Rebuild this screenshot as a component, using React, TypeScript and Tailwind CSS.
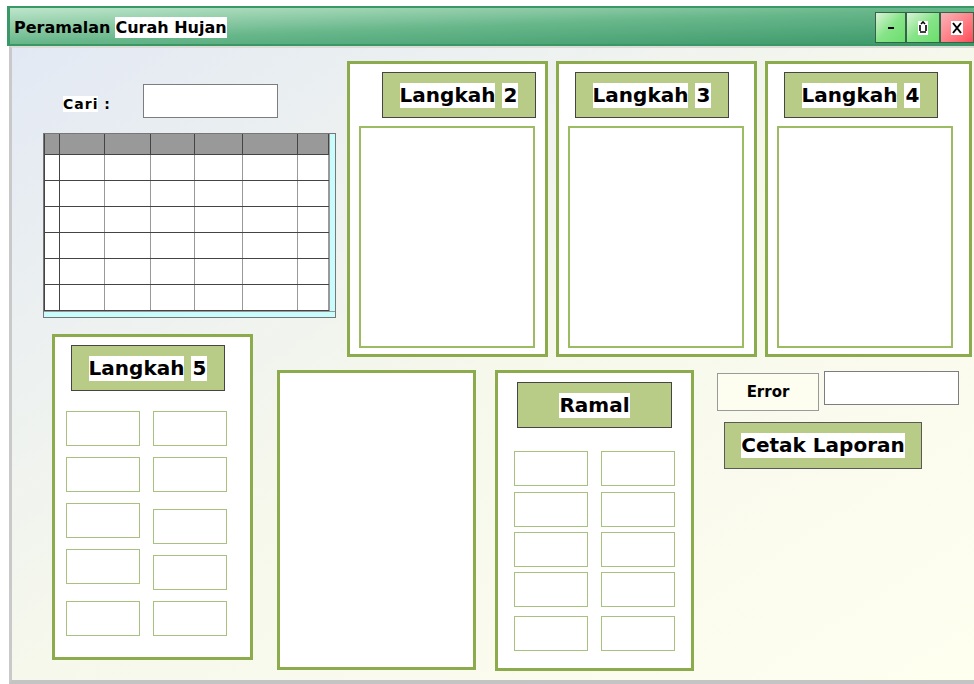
import React, { FC } from "react";

const txt = "font-['DejaVu_Sans',sans-serif] font-bold text-black";

// single entry field of the forecast form
const Field: FC<{ className?: string }> = ({ className = "" }) => (
  <div className={`h-[35px] w-[74px] border border-[#a8c17e] bg-white ${className}`} />
);

const Caption: FC<{ word: string; num?: string; className?: string }> = ({ word, num, className = "" }) => (
  <div
    className={`flex h-[46px] items-center justify-center border border-[#454545] bg-[#b8cc87] text-[20px] leading-[25px] ${txt} ${className}`}
  >
    <span className="bg-white">{word}</span>
    {num && <span className="ml-[7px] bg-white px-[1px]">{num}</span>}
  </div>
);

const StepPanel: FC<{ num: string; titleLeft: string; width: string }> = ({ num, titleLeft, width }) => (
  <div className={`h-[296px] ${width} border-[3px] border-[#8bab4c] bg-white`}>
    <Caption word="Langkah" num={num} className={`mt-[8px] w-[154px] ${titleLeft}`} />
    <div className="ml-[9px] mt-[8px] h-[222px] w-[176px] border-2 border-[#9dbb63] bg-white" />
  </div>
);

const colWidths = [15, 45, 46, 44, 48, 55, 31];

const DataGrid = () => (
  <div className="w-[293px] border border-[#777] bg-[#c9fcfc]">
    <div className="flex">
      <table className="w-[284px] table-fixed border-collapse">
        <colgroup>
          {colWidths.map((w, i) => (
            <col key={i} style={{ width: w }} />
          ))}
        </colgroup>
        <thead>
          <tr className="h-[20px] bg-[#999999]">
            {colWidths.map((_, i) => (
              <th key={i} className="border border-t-0 border-[#444] p-0" />
            ))}
          </tr>
        </thead>
        <tbody>
          {[0, 1, 2, 3, 4, 5].map((r) => (
            <tr key={r} className="h-[26px] bg-white">
              {colWidths.map((_, c) => (
                <td
                  key={c}
                  className={`border-y border-y-[#444] border-x ${c === 0 ? "border-x-[#444]" : "border-x-[#999]"} p-0`}
                />
              ))}
            </tr>
          ))}
        </tbody>
      </table>
      <div className="flex-1 border-l border-[#999]" />
    </div>
    <div className="h-[6px] border-t border-[#999]" />
  </div>
);

const WinButton: FC<{ kind: "min" | "max" | "close" }> = ({ kind }) => {
  const tone =
    kind === "close"
      ? "w-[34px] bg-gradient-to-br from-[#f7b3b9] to-[#ff4659]"
      : kind === "max"
      ? "w-[34px] bg-gradient-to-br from-[#d8f2d8] via-[#86e488] to-[#6bde6c]"
      : "w-[31px] bg-gradient-to-br from-[#d8f2d8] via-[#86e488] to-[#6bde6c]";
  return (
    <div className={`flex h-[31px] items-center justify-center border border-[#35634a] ${tone}`}>
      {kind === "min" && <div className="h-[2px] w-[6px] bg-black" />}
      {kind === "max" && (
        <svg width="10" height="14" viewBox="0 0 10 14">
          <rect x="0" y="0" width="10" height="14" fill="#fff" />
          <path d="M3 3 L5 1 L7 3 M2 4 V10 M8 4 V10 M2 11 H8" stroke="#000" strokeWidth="1.6" fill="none" />
        </svg>
      )}
      {kind === "close" && (
        <svg width="12" height="14" viewBox="0 0 12 14">
          <rect x="0" y="0" width="12" height="14" fill="#fff" />
          <path d="M2 2 L10 12 M10 2 L2 12" stroke="#000" strokeWidth="2" />
        </svg>
      )}
    </div>
  );
};

const boxRows5a = [0, 11, 11, 11, 17];
const boxRows5b = [0, 11, 17, 11, 11];
const ramalRows = [0, 6, 5, 5, 9];

export default function App() {
  return (
    <div className="h-[684px] w-[974px] overflow-hidden bg-white">
      {/* title bar */}
      <div className="ml-[7px] mt-[6px] flex h-[40px] w-[967px] border-y-[2px] border-l-[3px] border-[#399865] bg-gradient-to-br from-[#bde6cb] via-[#66b68a] to-[#3a9868]">
        <div className={`flex items-center pl-[4px] pt-[3px] text-[16px] leading-[21px] ${txt}`}>
          <span>Peramalan</span>
          <span className="ml-[5px] bg-white">Curah Hujan</span>
        </div>
        <div className="ml-auto mt-[4px] flex">
          <WinButton kind="min" />
          <WinButton kind="max" />
          <WinButton kind="close" />
        </div>
      </div>

      {/* form body */}
      <div className="ml-[9px] h-[638px] border-b-[4px] border-l-[3px] border-t-[2px] border-b-[#c4c4c4] border-l-[#c9c9c9] border-t-[#dcdcd6] bg-gradient-to-br from-[#e3e9f4] via-[#f6f8ec] to-[#fffff0]">
        <div className="flex items-start pt-[13px]">
          <div className="ml-[31px] w-[293px]">
            <div className="mt-[23px] flex items-center">
              <div className={`ml-[20px] mt-[6px] w-[80px] text-[14px] leading-[16px] tracking-[1px] ${txt}`}>
                <span className="bg-white">Cari</span> :
              </div>
              <div className="h-[34px] w-[135px] border border-[#7d7d7d] bg-white" />
            </div>
            <div className="mt-[15px]">
              <DataGrid />
            </div>
          </div>
          <div className="ml-[11px]">
            <StepPanel num="2" titleLeft="ml-[32px]" width="w-[201px]" />
          </div>
          <div className="ml-[8px]">
            <StepPanel num="3" titleLeft="ml-[16px]" width="w-[201px]" />
          </div>
          <div className="ml-[8px]">
            <StepPanel num="4" titleLeft="ml-[16px]" width="w-[207px]" />
          </div>
        </div>

        <div className="-mt-[23px] flex items-start">
          {/* Langkah 5 */}
          <div className="ml-[40px] h-[326px] w-[201px] border-[3px] border-[#8bab4c] bg-white">
            <Caption word="Langkah" num="5" className="ml-[16px] mt-[8px] w-[154px]" />
            <div className="ml-[11px] mt-[20px] flex gap-[13px]">
              <div>
                {boxRows5a.map((m, i) => (
                  <Field key={i} className={m === 17 ? "mt-[17px]" : m === 11 ? "mt-[11px]" : ""} />
                ))}
              </div>
              <div>
                {boxRows5b.map((m, i) => (
                  <Field key={i} className={m === 17 ? "mt-[17px]" : m === 11 ? "mt-[11px]" : ""} />
                ))}
              </div>
            </div>
          </div>

          <div className="ml-[24px] mt-[36px] h-[300px] w-[199px] border-[3px] border-[#8bab4c] bg-white" />

          {/* Ramal */}
          <div className="ml-[19px] mt-[36px] h-[301px] w-[199px] border-[3px] border-[#8bab4c] bg-white">
            <Caption word="Ramal" className="ml-[19px] mt-[9px] w-[155px]" />
            <div className="ml-[16px] mt-[23px] flex gap-[13px]">
              {[0, 1].map((c) => (
                <div key={c}>
                  {ramalRows.map((m, i) => (
                    <Field
                      key={i}
                      className={m === 6 ? "mt-[6px]" : m === 5 ? "mt-[5px]" : m === 9 ? "mt-[9px]" : ""}
                    />
                  ))}
                </div>
              ))}
            </div>
          </div>

          {/* error + report */}
          <div className="ml-[23px] mt-[37px]">
            <div className="flex items-start">
              <div
                className={`mt-[2px] flex h-[38px] w-[102px] items-center justify-center border border-[#9a9a9a] bg-[#fdfdf0] text-[15px] ${txt}`}
              >
                Error
              </div>
              <div className="ml-[5px] h-[34px] w-[135px] border border-[#7d7d7d] bg-white" />
            </div>
            <div
              className={`ml-[7px] mt-[11px] flex h-[47px] w-[198px] items-center justify-center border border-[#595959] bg-[#b8cc87] text-[20px] leading-[25px] ${txt}`}
            >
              <span className="bg-white">Cetak Laporan</span>
            </div>
          </div>
        </div>
      </div>
    </div>
  );
}
